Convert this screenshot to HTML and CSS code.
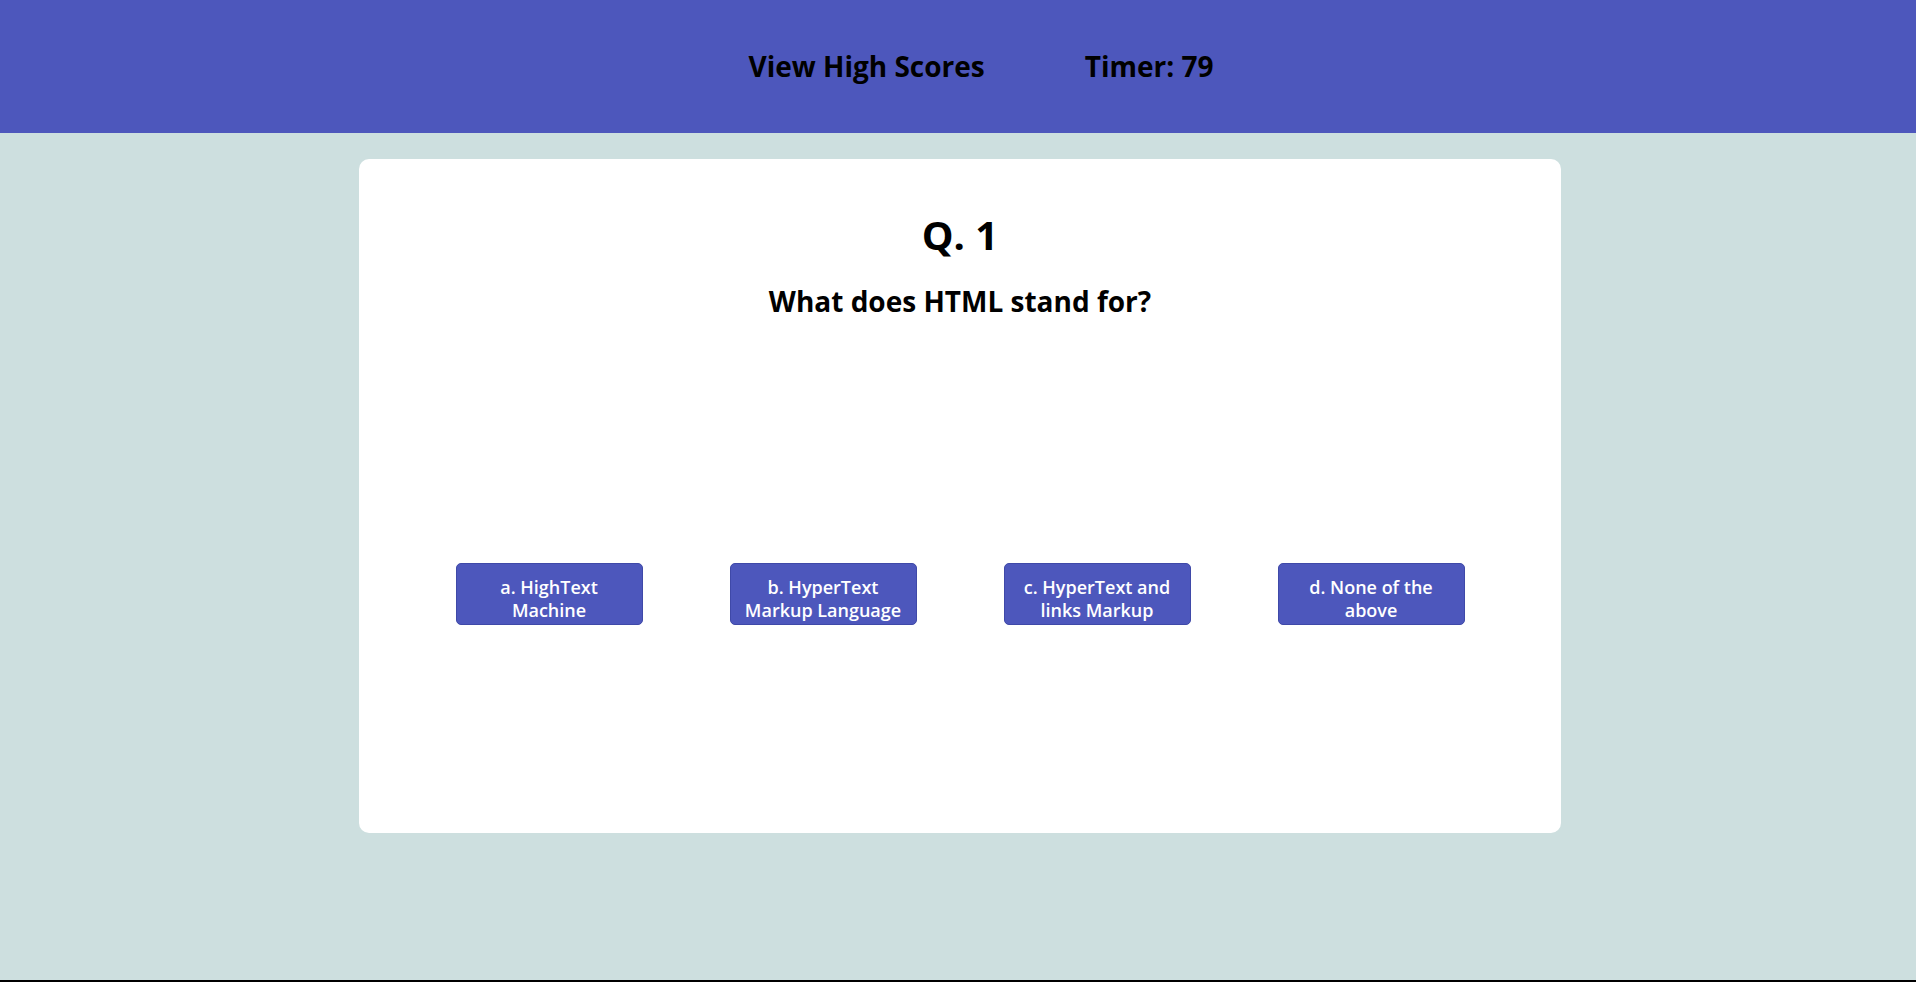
FILE: index.html
```html
<!DOCTYPE html>
<html>
<head>
<meta charset="utf-8">
<link rel="stylesheet" href="styles.css">
</head>
<body>
<div class="page">
  <header class="topbar">
    <a class="scores">View High Scores</a>
    <span class="timer">Timer: 79</span>
  </header>
  <main class="main">
    <section class="card">
      <h1 class="qnum">Q. 1</h1>
      <h2 class="question">What does HTML stand for?</h2>
      <div class="answers">
        <button class="answer">a. HighText Machine</button>
        <button class="answer">b. HyperText Markup Language</button>
        <button class="answer">c. HyperText and links Markup</button>
        <button class="answer">d. None of the above</button>
      </div>
    </section>
  </main>
  <div class="bottomline"></div>
</div>
</body>
</html>
```

FILE: styles.css
```css
html, body {
  margin: 0;
  padding: 0;
}
body {
  background: #cddfdf;
  font-family: "Open Sans", "Noto Sans", sans-serif;
  color: #000;
}
.page {
  min-height: 100vh;
  display: flex;
  flex-direction: column;
}
.topbar {
  height: 133px;
  background: #4d57bc;
  display: flex;
  justify-content: center;
  align-items: flex-start;
  gap: 100px;
  padding-left: 46px;
  box-sizing: border-box;
}
.scores, .timer {
  font-size: 28px;
  font-weight: 700;
  line-height: 34px;
  margin-top: 49px;
  color: #000;
}
.main {
  flex: 1;
  display: flex;
  justify-content: center;
  align-items: flex-start;
  padding-top: 26px;
  padding-left: 4px;
}
.card {
  width: 1202px;
  height: 674px;
  background: #fff;
  border-radius: 10px;
  box-sizing: border-box;
  display: flex;
  flex-direction: column;
  align-items: center;
}
.qnum {
  margin: 52px 0 0;
  font-size: 40px;
  line-height: 48px;
  font-weight: 700;
}
.question {
  margin: 25px 0 0;
  font-size: 28px;
  line-height: 34px;
  font-weight: 700;
}
.answers {
  margin-top: 245px;
  display: flex;
  gap: 87px;
}
.answer {
  width: 187px;
  height: 62px;
  background: #4d57bc;
  color: #fff;
  border: 1px solid #3f49a8;
  border-radius: 5px;
  font-family: "Open Sans", "Noto Sans", sans-serif;
  font-size: 18px;
  font-weight: 600;
  line-height: 23px;
  padding: 9px 10px 0;
  text-align: center;
}
.bottomline {
  height: 2px;
  background: #000;
}
```
